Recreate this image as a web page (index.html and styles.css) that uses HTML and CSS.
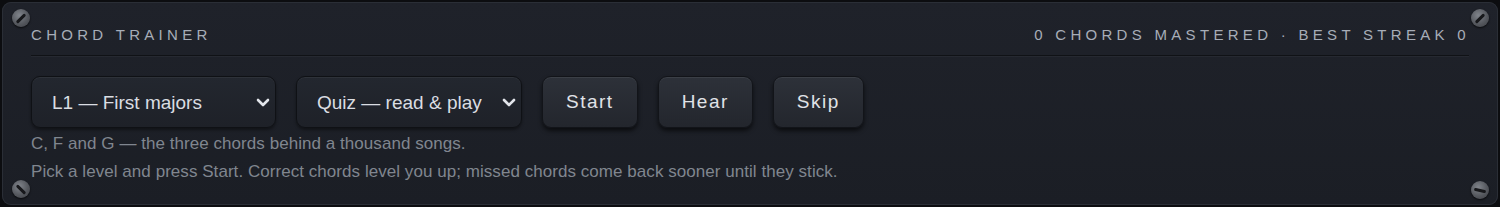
FILE: index.html
```html
<!doctype html>
<html lang="en">
<head>
    <meta charset="UTF-8">
    <title>Chord Trainer</title>
    <link rel="stylesheet" href="styles.css">
</head>
<body>
<div class="panel">
    <span class="screw tl"></span>
    <span class="screw tr"></span>
    <span class="screw bl"></span>
    <span class="screw br"></span>

    <div class="head">
        <span class="title">Chord Trainer</span>
        <span class="stats">0 chords mastered · best streak 0</span>
    </div>

    <div class="controls">
        <label class="pick level">
            <select>
                <option>L1 — First majors</option>
            </select>
            <svg class="chev" width="14" height="9" viewBox="0 0 14 9"><path d="M2 2l5 5 5-5" fill="none" stroke="#e2e5ea" stroke-width="2.6" stroke-linecap="round" stroke-linejoin="round"/></svg>
        </label>
        <label class="pick mode">
            <select>
                <option>Quiz — read &amp; play</option>
            </select>
            <svg class="chev" width="14" height="9" viewBox="0 0 14 9"><path d="M2 2l5 5 5-5" fill="none" stroke="#e2e5ea" stroke-width="2.6" stroke-linecap="round" stroke-linejoin="round"/></svg>
        </label>
        <button>Start</button>
        <button>Hear</button>
        <button>Skip</button>
    </div>

    <p class="blurb">C, F and G — the three chords behind a thousand songs.</p>
    <p class="hint">Pick a level and press Start. Correct chords level you up; missed chords come back sooner until they stick.</p>
</div>
</body>
</html>
```

FILE: styles.css
```css
html, body {
    margin: 0;
    background: #0c0d10;
}

body {
    padding: 2px;
    font-family: "Liberation Sans", Arial, sans-serif;
}

.panel {
    position: relative;
    height: 203px;
    box-sizing: border-box;
    padding: 24px 29px 0 29px;
    background: linear-gradient(#1f222a, #1b1e25);
    border-radius: 9px;
    box-shadow: inset 0 0 0 1px #2a2e36;
}

.screw {
    position: absolute;
    width: 18px;
    height: 18px;
    border-radius: 50%;
    background: radial-gradient(circle at 40% 35%, #80848b, #55585e 55%, #3b3d42);
    box-shadow: 0 1px 2px rgba(0, 0, 0, 0.7);

    &::after {
        content: "";
        position: absolute;
        left: 3px;
        top: 7.5px;
        width: 12px;
        height: 3px;
        border-radius: 2px;
        background: #17181b;
    }

    &.tl { left: 10px; top: 7px; }
    &.tr { right: 9px; top: 7px; }
    &.bl { left: 10px; bottom: 7px; }
    &.br { right: 9px; bottom: 6px; }

    &.tl::after, &.tr::after { transform: rotate(-45deg); }
    &.bl::after { transform: rotate(45deg); }
    &.br::after { transform: rotate(12deg); }
}

.head {
    display: flex;
    justify-content: space-between;
    align-items: baseline;
    line-height: 18px;
    padding-bottom: 11px;
    border-bottom: 1px solid #101216;
    box-shadow: 0 1px 0 rgba(255, 255, 255, 0.04);
    font-size: 15px;
    letter-spacing: 4.3px;
    text-transform: uppercase;
    color: #a7adb8;

    .stats {
        margin-right: -1px;
    }
}

.controls {
    display: flex;
    gap: 20px;
    margin-top: 20px;

    .pick {
        position: relative;
        display: block;

        select {
            appearance: none;
            width: 100%;
            height: 52px;
            padding: 0 0 0 20px;
            border: 1px solid #0f1115;
            border-radius: 9px;
            background: linear-gradient(#23272f, #1e2128);
            box-shadow: inset 0 1px 0 rgba(255, 255, 255, 0.05), 0 2px 3px rgba(0, 0, 0, 0.4);
            font-family: inherit;
            font-size: 19px;
            color: #dadde2;
            outline: none;
        }

        .chev {
            position: absolute;
            right: 6px;
            top: 22px;
        }
    }

    .level { width: 245px; }
    .mode { width: 226px; }

    button {
        height: 52px;
        padding: 0 23px;
        border: 1px solid #121419;
        border-radius: 9px;
        background: linear-gradient(#2d3139, #23262d);
        box-shadow: inset 0 1px 0 rgba(255, 255, 255, 0.07), 0 3px 4px rgba(0, 0, 0, 0.6);
        font-family: inherit;
        font-size: 19px;
        letter-spacing: 1.5px;
        color: #e0e3e7;
    }
}

p {
    margin: 0;
    font-size: 17px;
    line-height: 20px;
    letter-spacing: 0.05px;
    color: #80868f;
}

.blurb { margin-top: 6px; }
.hint { margin-top: 8px; }
```
